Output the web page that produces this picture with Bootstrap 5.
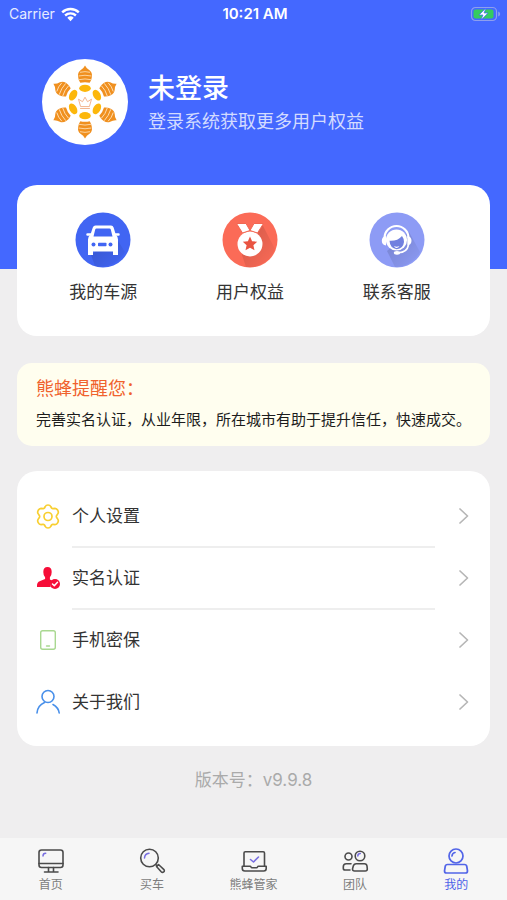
<!DOCTYPE html>
<html lang="zh-CN">
<head>
<meta charset="utf-8">
<meta name="viewport" content="width=device-width, initial-scale=1">
<title>我的</title>
<link href="https://cdn.jsdelivr.net/npm/bootstrap@5.3.0/dist/css/bootstrap.min.css" rel="stylesheet">
<style>
body { background: #efeeef; font-family: Inter, "Noto Sans CJK SC", sans-serif; color: #333; }
svg { display: block; flex: none; }
.hero { background: #4468ff; color: #fff; padding-bottom: 124px; }
.status { height: 28px; font-size: 14px; line-height: 28px; padding: 0 6px 0 9px; display: grid; grid-template-columns: 1fr auto 1fr; }
.status-side { color: #e6ebff; gap: 6px; }
.status-time { font-size: 15px; }
.profile { padding: 31px 42px 0; gap: 20px; }
.profile-text { padding-top: 3px; }
.profile-name { font-size: 27px; line-height: 36px; font-weight: 500; }
.profile-hint { font-size: 18px; line-height: 30px; color: #d3dbff; }
.page-body { padding: 0 17px; margin-top: -84px; }
.panel { background: #fff; border-radius: 20px; }
.shortcuts { padding: 27px 20px 32px 13px; }
.shortcut { font-size: 17px; line-height: 24px; gap: 12px; color: #333; }
.notice { background: #fffeef; border-radius: 15px; margin-top: 27px; padding: 12px 12px 9px 19px; color: #1c1c1c; font-size: 15px; line-height: 34px; }
.notice-title { color: #f0622d; font-size: 18px; line-height: 28px; font-weight: 400; }
.menu { margin-top: 25px; padding: 14px 20px 13px 18px; }
.menu-row { height: 62px; gap: 11px; color: #333; font-size: 17px; }
.menu-label { line-height: 60px; padding-top: 2px; border-bottom: 2px solid transparent; margin-right: 12px; }
.menu-label.ruled { border-color: #eee; }
.version { color: #aaa; font-size: 17px; line-height: 26px; margin-top: 21px; }
.tabs { background: #f6f6f6; height: 62px; }
.tab { font-size: 12px; line-height: 18px; color: #7d7d7d; padding-top: 8px; }
.tab.active { color: #4e62e8; }
.line { fill: none; stroke-linecap: round; stroke-linejoin: round; }
</style>
<script src="https://cdn.jsdelivr.net/npm/bootstrap@5.3.0/dist/js/bootstrap.bundle.min.js"></script>
</head>
<body class="d-flex flex-column min-vh-100">
<header class="hero">
  <div class="status align-items-center">
    <div class="status-side d-flex align-items-center"><span>Carrier</span>
      <svg width="19" height="15" viewBox="0 0 19 15"><path d="M1.2 5.3a12 12 0 0 1 16.6 0M4.1 8.500a8 8 0 0 1 10.800 0" fill="none" stroke="#fff" stroke-width="2.400"/><path d="M6.300 10.800a4.700 4.700 0 0 1 6.400 0L9.500 14.200z" fill="#fff"/></svg>
    </div>
    <div class="status-time fw-semibold">10:21 AM</div>
    <svg class="ms-auto" width="31" height="16" viewBox="0 0 31 16"><rect x="1.5" y="1.5" width="25" height="13" rx="4" fill="none" stroke="#8e9fee" stroke-width="1.2"/><rect x="3.5" y="3.5" width="20" height="9" rx="2" fill="#35cb60"/><path d="M28.200 5.500v5q2-.8 2-2.500t-2-2.500" fill="#8e9fee"/><path d="M16 2l-7 7h4l-2 5 7-7h-4z" fill="#fff" stroke="#4468ff" stroke-width=".7"/></svg>
  </div>
  <div class="profile d-flex align-items-center">
    <svg width="86" height="86" viewBox="0 0 86 86" role="img" aria-label="头像">
      <defs><g id="bee"><ellipse cx="43" cy="29.300" rx="5.800" ry="3.600" fill="#fcb70b"/><path d="M43 6.500q1.500 3.200 4.500 4.800 2.800 2 2.500 6-.3 3.800-2.300 6.500-4.700-1.300-9.400 0-2-2.700-2.300-6.500-.3-4 2.500-6Q41.500 9.700 43 6.500z" fill="#f0901f"/><path d="M38 13.300q5-1.300 10 0M36.500 17q6.500-1.500 13 0M37 20.700q6-1.500 12 0" fill="none" stroke="#ffe6c2" stroke-width=".8"/></g></defs>
      <circle cx="43" cy="43" r="43" fill="#fff"/>
      <use href="#bee"/><use href="#bee" transform="rotate(60 43 43)"/><use href="#bee" transform="rotate(120 43 43)"/><use href="#bee" transform="rotate(180 43 43)"/><use href="#bee" transform="rotate(240 43 43)"/><use href="#bee" transform="rotate(300 43 43)"/>
      <path class="line" d="M38.500 47.200l-2-7 4 2.500 2.500-4.500 2.500 4.500 4-2.500-2 7zM38.500 49.500h9" stroke="#f1ad83" stroke-width=".9"/>
    </svg>
    <div class="profile-text">
      <h1 class="profile-name mb-0">未登录</h1>
      <div class="profile-hint">登录系统获取更多用户权益</div>
    </div>
  </div>
</header>

<main class="page-body flex-grow-1 position-relative">
  <nav class="panel shortcuts row g-0" aria-label="快捷入口">
    <a href="#cars" class="shortcut col d-flex flex-column align-items-center text-decoration-none">
      <svg width="56" height="56" viewBox="0 0 56 56"><defs><linearGradient id="shade" x1="0" y1="0" x2="1" y2="1"><stop offset=".3" stop-color="#000" stop-opacity=".12"/><stop offset="1" stop-color="#000" stop-opacity="0"/></linearGradient></defs><circle cx="28" cy="28" r="27.500" fill="#4165f3"/><path d="M40 24l10 16a27.500 27.500 0 0 1-30 14l-4-11z" fill="url(#shade)"/><path fill="#fff" fill-rule="evenodd" d="M20.500 13.500h15.500q2 0 2.600 2l2.300 7.600q2 1.500 2.100 4.400V43h-5v-3.500H18V43h-5V27.500q.1-2.900 2.300-4.400l2.500-7.600q.7-2 2.700-2zM21.500 16.600q-1 0-1.300 1L18.500 24.500h19l-1.700-6.900q-.3-1-1.300-1z"/><path d="M12.500 22.500h3.500M40 22.500h3.500" stroke="#fff" stroke-width="2.500" stroke-linecap="round"/><g fill="#4165f3"><circle cx="18.500" cy="32.500" r="2"/><circle cx="35.500" cy="32.500" r="2"/><rect x="23" y="30.700" width="8.500" height="3.600" rx=".8"/></g></svg>
      <span>我的车源</span>
    </a>
    <a href="#benefits" class="shortcut col d-flex flex-column align-items-center text-decoration-none">
      <svg width="56" height="56" viewBox="0 0 56 56"><circle cx="28" cy="28" r="27.500" fill="#fb6b57"/><path d="M40 12l13 25a27.500 27.500 0 0 1-29 18l-4-12z" fill="url(#shade)"/><circle cx="28" cy="32" r="12.500" fill="#fff"/><path d="M14.500 11.500H24l4 7-7.500 2.500zM41.500 11.500H32l-4 7 7.500 2.500z" fill="#fff" stroke="#f26652" stroke-width="1" stroke-linejoin="round"/><path d="M28 24.500l2.100 4.700 5.100.5-3.800 3.500 1.100 5.100L28 35.700l-4.500 2.600 1.100-5.100-3.800-3.500 5.100-.5z" fill="#e95442"/></svg>
      <span>用户权益</span>
    </a>
    <a href="#support" class="shortcut col d-flex flex-column align-items-center text-decoration-none">
      <svg width="56" height="56" viewBox="0 0 56 56"><circle cx="28" cy="28" r="27.500" fill="#8d9bf5"/><path d="M40 20l11 20a27.500 27.500 0 0 1-25 15l-8-16z" fill="url(#shade)"/><path d="M15.500 26a12 12 0 0 1 24 0" fill="none" stroke="#fff" stroke-width="2.200"/><circle cx="27.500" cy="28" r="10.600" fill="#fff"/><path d="M20.500 28.800q8 .5 12.500-4.800 2 2.500 2 6-.7 6.500-7.300 7.200-6.700-.7-7.200-8.400z" fill="#7180df"/><path d="M25 34q2.500 1.500 5.500 0-.7 1.800-2.700 1.900T25 34z" fill="#fff"/><path d="M17 24v9.500q-4.200-.5-4.200-4.700T17 24zM38.300 24v9.500q4.200-.5 4.200-4.700T38.300 24z" fill="#fff"/><path d="M39.500 33q-1.500 7.500-10 7.800" fill="none" stroke="#fff" stroke-width="1.600"/><ellipse cx="28" cy="40.800" rx="3.200" ry="1.900" fill="#fff"/></svg>
      <span>联系客服</span>
    </a>
  </nav>

  <section class="notice">
    <h2 class="notice-title mb-0">熊蜂提醒您：</h2>
    <p class="mb-0">完善实名认证，从业年限，所在城市有助于提升信任，快速成交。</p>
  </section>

  <nav class="panel menu" aria-label="设置">
    <a href="#settings" class="menu-row d-flex align-items-center text-decoration-none">
      <svg width="26" height="26" viewBox="0 0 26 26"><g class="line" stroke="#f8cf31" stroke-width="1.700"><path d="M10.300 3.500Q11 2 13 2t2.700 1.500l1 1.700q.5.500 1.300.4l2-.3q1.800.1 2.800 2t.1 3.300l-1.400 2.200q-.3.700 0 1.400l1.400 2.200q.9 1.400-.1 3.300t-2.800 2l-2-.3q-.8-.1-1.300.4l-1 1.700Q15 25 13 25t-2.700-1.500l-1-1.700q-.5-.5-1.300-.4l-2 .3q-1.800-.1-2.800-2t-.1-3.300l1.400-2.200q.3-.7 0-1.400L3.100 10.600q-.9-1.400.1-3.300t2.800-2l2 .3q.8.1 1.300-.4z"/><circle cx="13" cy="13.500" r="4"/></g></svg>
      <span class="menu-label ruled flex-grow-1">个人设置</span>
      <svg width="12" height="18" viewBox="0 0 12 18"><path class="line" d="M2 2l7.500 7L2 16" stroke="#b6b6b6" stroke-width="1.700"/></svg>
    </a>
    <a href="#verify" class="menu-row d-flex align-items-center text-decoration-none">
      <svg width="26" height="26" viewBox="0 0 26 26"><path fill="#f60d38" d="M12.500 2q4.200 0 4.200 5 0 3.500-1.800 5.200v2.200l2.600 1.300a6 6 0 0 0-1.800 6.300H2q-.5-5 3.200-6l4.900-2v-1.800Q8.300 10.500 8.300 7q0-5 4.200-5z"/><circle cx="20" cy="19" r="5" fill="#f60d38"/><path class="line" d="M17.500 19l1.800 1.700 3.200-3.500" stroke="#fff" stroke-width="1.500"/></svg>
      <span class="menu-label ruled flex-grow-1">实名认证</span>
      <svg width="12" height="18" viewBox="0 0 12 18"><path class="line" d="M2 2l7.500 7L2 16" stroke="#b6b6b6" stroke-width="1.700"/></svg>
    </a>
    <a href="#phone" class="menu-row d-flex align-items-center text-decoration-none">
      <svg width="26" height="26" viewBox="0 0 26 26"><g class="line" stroke="#a9d891" stroke-width="1.400"><rect x="5.700" y="3.700" width="14.600" height="18.600" rx="2"/><path d="M11.500 19h3"/></g></svg>
      <span class="menu-label flex-grow-1">手机密保</span>
      <svg width="12" height="18" viewBox="0 0 12 18"><path class="line" d="M2 2l7.500 7L2 16" stroke="#b6b6b6" stroke-width="1.700"/></svg>
    </a>
    <a href="#about" class="menu-row d-flex align-items-center text-decoration-none">
      <svg width="26" height="26" viewBox="0 0 26 26"><g class="line" stroke="#4990ea" stroke-width="1.600"><circle cx="13" cy="7.500" r="6"/><path d="M2 24q.5-7.500 7.500-10.500M18 15.500q5.500 3 6.200 8.500"/></g></svg>
      <span class="menu-label flex-grow-1">关于我们</span>
      <svg width="12" height="18" viewBox="0 0 12 18"><path class="line" d="M2 2l7.500 7L2 16" stroke="#b6b6b6" stroke-width="1.700"/></svg>
    </a>
  </nav>
  <p class="version text-center mb-0">版本号：v9.9.8</p>
</main>

<footer class="tabs sticky-bottom">
  <nav class="row g-0" aria-label="主导航">
    <a href="#home" class="tab col d-flex flex-column align-items-center text-decoration-none">
      <svg width="30" height="30" viewBox="0 0 30 30"><g class="line" stroke="#4b4b4b" stroke-width="1.600"><rect x="3" y="4" width="24" height="17.500" rx="2.500"/><path d="M3 17.500h24M12.500 21.500v4M17.500 21.500v4M8.500 26h13.500"/></g><path class="line" d="M7 10q0-2.700 2.700-2.700" stroke="#786ee0" stroke-width="1.500"/></svg>
      首页
    </a>
    <a href="#buy" class="tab col d-flex flex-column align-items-center text-decoration-none">
      <svg width="30" height="30" viewBox="0 0 30 30"><g class="line" stroke="#4b4b4b" stroke-width="1.600"><circle cx="12.500" cy="12" r="8.800"/><path d="M18.700 18.500l1.600 1.600M21.500 18.500l5.200 4.800q1.300 1.500 0 2.600-1.300 1-2.500-.2l-4.700-5.200z"/></g><path class="line" d="M7.500 12q.3-4.300 4.500-4.700" stroke="#786ee0" stroke-width="1.500"/></svg>
      买车
    </a>
    <a href="#manager" class="tab col d-flex flex-column align-items-center text-decoration-none">
      <svg width="30" height="30" viewBox="0 0 30 30"><g class="line" stroke="#4b4b4b" stroke-width="1.600"><path d="M5 20V7q0-1.300 1.300-1.300h17.900q1.300 0 1.300 1.300v13M3.300 20.300h7.700q.7 0 1 .7t1 .7h4.500q.7 0 1-.7t1-.7h7.700v2.200q0 2.500-2.500 2.500H5.800q-2.500 0-2.500-2.500z"/></g><path class="line" d="M11.500 13.500l3 2.500 5-5" stroke="#786ee0" stroke-width="1.600"/></svg>
      熊蜂管家
    </a>
    <a href="#team" class="tab col d-flex flex-column align-items-center text-decoration-none">
      <svg width="30" height="30" viewBox="0 0 30 30"><g class="line" stroke="#4b4b4b" stroke-width="1.600"><circle cx="8.500" cy="10.500" r="3.500"/><circle cx="20" cy="10" r="4.800"/><path d="M11 17.700H6.300q-3 0-3 3v1.500q0 1.800 1.800 1.800H10M16.200 17.700h8.300q2.200 0 2.500 2.300l.3 3q0 2-2 2H14.500q-2 0-2-2l.8-3q.6-2.300 2.900-2.300z"/></g><path class="line" d="M17.800 10q0-2.500 2.500-2.500" stroke="#786ee0" stroke-width="1.500"/></svg>
      团队
    </a>
    <a href="#me" aria-current="page" class="tab active col d-flex flex-column align-items-center text-decoration-none">
      <svg width="30" height="30" viewBox="0 0 30 30"><g class="line" stroke="#5265e8" stroke-width="1.700"><circle cx="15" cy="10" r="7"/><path d="M6.500 18.500h17q2 0 2.300 2l.7 4.500q0 2-2 2h-19q-2 0-2-2l.7-4.500q.3-2 2.300-2zM11 10q.2-3 3-3.500"/></g></svg>
      我的
    </a>
  </nav>
</footer>
</body>
</html>
